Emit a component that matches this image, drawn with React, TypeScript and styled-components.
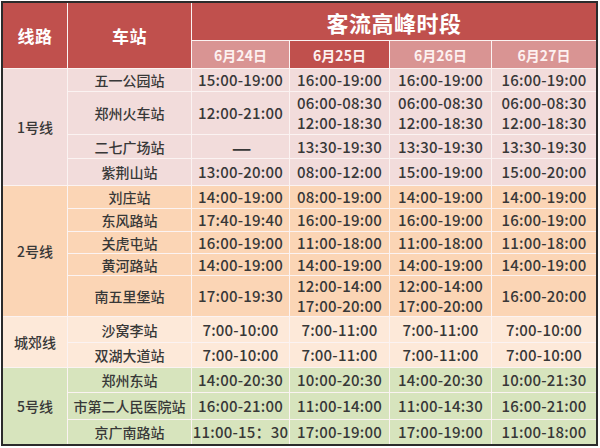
import React from "react";
import styled, { createGlobalStyle } from "styled-components";

const GlobalStyle = createGlobalStyle`
  html, body {
    margin: 0;
    padding: 0;
    background: #ffffff;
  }
  body {
    font-family: "Noto Sans CJK SC", "Noto Sans", sans-serif;
  }
`;

type Tone = "line1" | "line2" | "suburb" | "line5";

const tones: Record<Tone, string> = {
  line1: "#f2dcdb",
  line2: "#fbd5b5",
  suburb: "#fde9d9",
  line5: "#d7e4bd",
};

const Frame = styled.div`
  width: 593px;
  margin: 1px 0 0 1px;
  border: 2px solid #2b2b2b;
`;

const Grid = styled.div`
  display: grid;
  grid-template-columns: 64px 123px 97px 99px 101px 104px;
  grid-template-rows: 37px 27px 22px 42px 23px 26px 22px 22px 21px 21px 40px 25px 24px 24px 26px 24px;
  gap: 1px;
  background: #fbf3f2;
`;

const HeadCell = styled.div<{ $rows?: number; $cols?: number; $size: number }>`
  grid-row: span ${(p) => p.$rows ?? 1};
  grid-column: span ${(p) => p.$cols ?? 1};
  background: #c0504d;
  color: #ffffff;
  font-size: ${(p) => p.$size}px;
  font-weight: 700;
  display: flex;
  align-items: center;
  justify-content: center;
  letter-spacing: 0.5px;
`;

const DateCell = styled.div<{ $active?: boolean }>`
  background: ${(p) => (p.$active ? "#c0504d" : "#d99493")};
  color: #fdf1f0;
  font-size: 14px;
  font-weight: 700;
  display: flex;
  align-items: center;
  justify-content: center;
`;

const Cell = styled.div<{ $tone: Tone; $rows?: number }>`
  grid-row: span ${(p) => p.$rows ?? 1};
  background: ${(p) => tones[p.$tone]};
  color: #383838;
  font-size: 14px;
  font-weight: 500;
  line-height: 20px;
  display: flex;
  flex-direction: column;
  align-items: center;
  justify-content: center;
  white-space: nowrap;
`;

const TimeCell = styled(Cell)`
  font-size: 15px;
  letter-spacing: 0.2px;
`;

const Dash = styled.span`
  font-size: 11px;
  font-weight: 700;
  letter-spacing: -2px;
  transform: scaleY(1.6);
`;

type Row = { station: string; times: string[][] };
type Group = { name: string; tone: Tone; rows: Row[] };

const groups: Group[] = [
  {
    name: "1号线",
    tone: "line1",
    rows: [
      { station: "五一公园站", times: [["15:00-19:00"], ["16:00-19:00"], ["16:00-19:00"], ["16:00-19:00"]] },
      {
        station: "郑州火车站",
        times: [
          ["12:00-21:00"],
          ["06:00-08:30", "12:00-18:30"],
          ["06:00-08:30", "12:00-18:30"],
          ["06:00-08:30", "12:00-18:30"],
        ],
      },
      { station: "二七广场站", times: [["——"], ["13:30-19:30"], ["13:30-19:30"], ["13:30-19:30"]] },
      { station: "紫荆山站", times: [["13:00-20:00"], ["08:00-12:00"], ["15:00-19:00"], ["15:00-20:00"]] },
    ],
  },
  {
    name: "2号线",
    tone: "line2",
    rows: [
      { station: "刘庄站", times: [["14:00-19:00"], ["08:00-19:00"], ["14:00-19:00"], ["14:00-19:00"]] },
      { station: "东风路站", times: [["17:40-19:40"], ["16:00-19:00"], ["16:00-19:00"], ["16:00-19:00"]] },
      { station: "关虎屯站", times: [["16:00-19:00"], ["11:00-18:00"], ["11:00-18:00"], ["11:00-18:00"]] },
      { station: "黄河路站", times: [["14:00-19:00"], ["14:00-19:00"], ["14:00-19:00"], ["14:00-19:00"]] },
      {
        station: "南五里堡站",
        times: [
          ["17:00-19:30"],
          ["12:00-14:00", "17:00-20:00"],
          ["12:00-14:00", "17:00-20:00"],
          ["16:00-20:00"],
        ],
      },
    ],
  },
  {
    name: "城郊线",
    tone: "suburb",
    rows: [
      { station: "沙窝李站", times: [["7:00-10:00"], ["7:00-11:00"], ["7:00-11:00"], ["7:00-10:00"]] },
      { station: "双湖大道站", times: [["7:00-10:00"], ["7:00-11:00"], ["7:00-11:00"], ["7:00-10:00"]] },
    ],
  },
  {
    name: "5号线",
    tone: "line5",
    rows: [
      { station: "郑州东站", times: [["14:00-20:30"], ["10:00-20:30"], ["14:00-20:30"], ["10:00-21:30"]] },
      { station: "市第二人民医院站", times: [["16:00-21:00"], ["11:00-14:00"], ["11:00-14:30"], ["16:00-21:00"]] },
      { station: "京广南路站", times: [["11:00-15：30"], ["17:00-19:00"], ["17:00-19:00"], ["11:00-18:00"]] },
    ],
  },
];

const dates = [
  { label: "6月24日", active: false },
  { label: "6月25日", active: true },
  { label: "6月26日", active: false },
  { label: "6月27日", active: false },
];

const App: React.FC = () => {
  return (
    <>
      <GlobalStyle />
      <Frame>
        <Grid>
          <HeadCell $rows={2} $size={17}>线路</HeadCell>
          <HeadCell $rows={2} $size={17}>车站</HeadCell>
          <HeadCell $cols={4} $size={22}>客流高峰时段</HeadCell>
          {dates.map((d) => (
            <DateCell key={d.label} $active={d.active}>
              {d.label}
            </DateCell>
          ))}
          {groups.map((g) =>
            g.rows.map((r, i) => (
              <React.Fragment key={r.station}>
                {i === 0 && (
                  <Cell $tone={g.tone} $rows={g.rows.length}>
                    {g.name}
                  </Cell>
                )}
                <Cell $tone={g.tone}>{r.station}</Cell>
                {r.times.map((t, j) => (
                  <TimeCell key={j} $tone={g.tone}>
                    {t.map((line) =>
                      line === "——" ? <Dash key={line}>{line}</Dash> : <span key={line}>{line}</span>
                    )}
                  </TimeCell>
                ))}
              </React.Fragment>
            ))
          )}
        </Grid>
      </Frame>
    </>
  );
};

export default App;
